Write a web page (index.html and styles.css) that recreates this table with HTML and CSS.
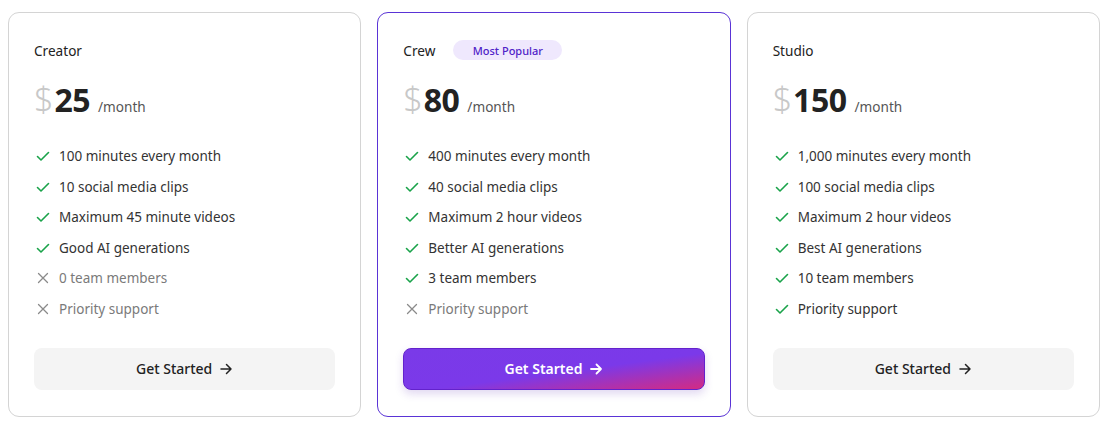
FILE: index.html
```html
<!DOCTYPE html>
<html lang="en">
<head>
<meta charset="utf-8">
<title>Pricing</title>
<link rel="stylesheet" href="styles.css">
</head>
<body>
<div class="plans">
  <div class="card">
    <div class="head"><span class="name">Creator</span></div>
    <div class="price"><span class="cur">$</span><span class="amt">25</span><span class="per">/month</span></div>
    <ul class="feats">
      <li class="yes"><svg viewBox="0 0 16 16"><path d="M2.5 8.5l3.5 3.5 7.5-7.5"/></svg>100 minutes every month</li>
      <li class="yes"><svg viewBox="0 0 16 16"><path d="M2.5 8.5l3.5 3.5 7.5-7.5"/></svg>10 social media clips</li>
      <li class="yes"><svg viewBox="0 0 16 16"><path d="M2.5 8.5l3.5 3.5 7.5-7.5"/></svg>Maximum 45 minute videos</li>
      <li class="yes"><svg viewBox="0 0 16 16"><path d="M2.5 8.5l3.5 3.5 7.5-7.5"/></svg>Good AI generations</li>
      <li class="no"><svg viewBox="0 0 16 16"><path d="M3.5 3.5l9 9M12.5 3.5l-9 9"/></svg>0 team members</li>
      <li class="no"><svg viewBox="0 0 16 16"><path d="M3.5 3.5l9 9M12.5 3.5l-9 9"/></svg>Priority support</li>
    </ul>
    <button class="btn">Get Started <svg class="arrow" viewBox="0 0 14 14"><path d="M2 7h10M7.5 2.5L12 7l-4.5 4.5"/></svg></button>
  </div>
  <div class="card featured">
    <div class="head"><span class="name">Crew</span><span class="badge">Most Popular</span></div>
    <div class="price"><span class="cur">$</span><span class="amt">80</span><span class="per">/month</span></div>
    <ul class="feats">
      <li class="yes"><svg viewBox="0 0 16 16"><path d="M2.5 8.5l3.5 3.5 7.5-7.5"/></svg>400 minutes every month</li>
      <li class="yes"><svg viewBox="0 0 16 16"><path d="M2.5 8.5l3.5 3.5 7.5-7.5"/></svg>40 social media clips</li>
      <li class="yes"><svg viewBox="0 0 16 16"><path d="M2.5 8.5l3.5 3.5 7.5-7.5"/></svg>Maximum 2 hour videos</li>
      <li class="yes"><svg viewBox="0 0 16 16"><path d="M2.5 8.5l3.5 3.5 7.5-7.5"/></svg>Better AI generations</li>
      <li class="yes"><svg viewBox="0 0 16 16"><path d="M2.5 8.5l3.5 3.5 7.5-7.5"/></svg>3 team members</li>
      <li class="no"><svg viewBox="0 0 16 16"><path d="M3.5 3.5l9 9M12.5 3.5l-9 9"/></svg>Priority support</li>
    </ul>
    <button class="btn primary">Get Started <svg class="arrow" viewBox="0 0 14 14"><path d="M2 7h10M7.5 2.5L12 7l-4.5 4.5"/></svg></button>
  </div>
  <div class="card">
    <div class="head"><span class="name">Studio</span></div>
    <div class="price"><span class="cur">$</span><span class="amt">150</span><span class="per">/month</span></div>
    <ul class="feats">
      <li class="yes"><svg viewBox="0 0 16 16"><path d="M2.5 8.5l3.5 3.5 7.5-7.5"/></svg>1,000 minutes every month</li>
      <li class="yes"><svg viewBox="0 0 16 16"><path d="M2.5 8.5l3.5 3.5 7.5-7.5"/></svg>100 social media clips</li>
      <li class="yes"><svg viewBox="0 0 16 16"><path d="M2.5 8.5l3.5 3.5 7.5-7.5"/></svg>Maximum 2 hour videos</li>
      <li class="yes"><svg viewBox="0 0 16 16"><path d="M2.5 8.5l3.5 3.5 7.5-7.5"/></svg>Best AI generations</li>
      <li class="yes"><svg viewBox="0 0 16 16"><path d="M2.5 8.5l3.5 3.5 7.5-7.5"/></svg>10 team members</li>
      <li class="yes"><svg viewBox="0 0 16 16"><path d="M2.5 8.5l3.5 3.5 7.5-7.5"/></svg>Priority support</li>
    </ul>
    <button class="btn">Get Started <svg class="arrow" viewBox="0 0 14 14"><path d="M2 7h10M7.5 2.5L12 7l-4.5 4.5"/></svg></button>
  </div>
</div>
</body>
</html>
```
FILE: styles.css
```css
* { box-sizing: border-box; }
html, body { background: #fff; }
body {
  margin: 0;
  padding: 12px 8px 8px;
  font-family: "Noto Sans", "Open Sans", sans-serif;
  color: #222;
}
.plans {
  display: grid;
  grid-template-columns: repeat(3, 1fr);
  gap: 16px;
}
.card {
  border: 1px solid #d4d4d4;
  border-radius: 11px;
  padding: 25px 25px 25px 25px;
  display: flex;
  flex-direction: column;
  height: 405px;
}
.card.featured { border-color: #5a34d6; }
.head {
  display: flex;
  align-items: center;
  gap: 18px;
  height: 24px;
}
.name { font-size: 13.6px; color: #222; }
.badge {
  background: #efe8fd;
  color: #4f23c8;
  font-size: 11px;
  font-weight: 500;
  width: 109px;
  height: 20px;
  border-radius: 10px;
  display: flex;
  align-items: center;
  justify-content: center;
}
.price {
  margin-top: 14px;
  height: 40px;
  display: flex;
  align-items: baseline;
}
.cur { font-size: 34px; color: #c8c8c8; font-weight: 300; }
.amt { font-size: 32px; font-weight: 700; color: #222; margin-left: 1px; letter-spacing: -0.5px; }
.per { font-size: 13.6px; color: #555; margin-left: 8px; }
.feats {
  list-style: none;
  margin: 30px 0 0;
  padding: 0;
  display: flex;
  flex-direction: column;
  gap: 10.5px;
}
.feats li {
  display: flex;
  align-items: center;
  height: 20px;
  font-size: 13.5px;
  color: #333;
}
.feats svg {
  width: 16px;
  height: 16px;
  margin-left: 1px;
  margin-right: 8px;
  fill: none;
  stroke-width: 1.6;
  stroke-linecap: round;
  stroke-linejoin: round;
}
.feats li.yes svg { stroke: #1aa34a; }
.feats li.no svg { stroke: #8a8a8a; stroke-width: 1.3; }
.feats li.no { color: #7a7a7a; }
.btn {
  margin-top: 29px;
  height: 42px;
  border: 1px solid transparent;
  border-radius: 8px;
  background: #f4f4f4;
  color: #222;
  font-family: inherit;
  font-size: 14px;
  font-weight: 500;
  display: flex;
  align-items: center;
  justify-content: center;
  gap: 7px;
  cursor: pointer;
}
.btn .arrow {
  width: 14px;
  height: 14px;
  fill: none;
  stroke: currentColor;
  stroke-width: 1.5;
  stroke-linecap: round;
  stroke-linejoin: round;
}
.btn.primary {
  background: linear-gradient(to bottom right, #7a3ae8 0%, #7b39e9 55%, #d42b82 100%);
  border-color: #6322cc;
  color: #fff;
  font-weight: 600;
  box-shadow: 0 4px 8px rgba(90, 40, 180, 0.18);
}
.btn.primary .arrow { stroke-width: 1.8; }
```
